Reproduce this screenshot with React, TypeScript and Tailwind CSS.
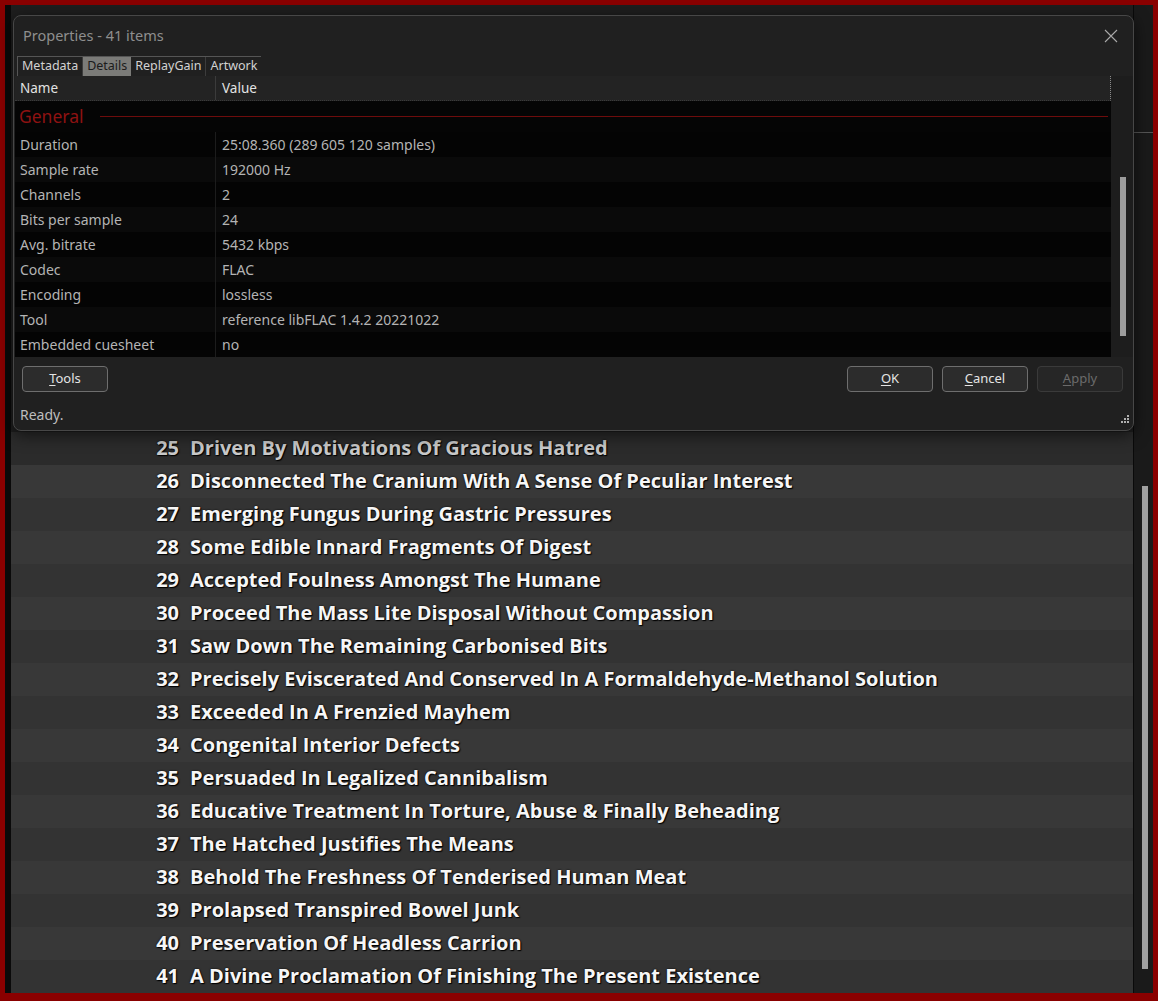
import React from 'react';

const details: [string, string][] = [
  ['Duration', '25:08.360 (289 605 120 samples)'],
  ['Sample rate', '192000 Hz'],
  ['Channels', '2'],
  ['Bits per sample', '24'],
  ['Avg. bitrate', '5432 kbps'],
  ['Codec', 'FLAC'],
  ['Encoding', 'lossless'],
  ['Tool', 'reference libFLAC 1.4.2 20221022'],
  ['Embedded cuesheet', 'no'],
];

const tracks: [number, string][] = [
  [25, 'Driven By Motivations Of Gracious Hatred'],
  [26, 'Disconnected The Cranium With A Sense Of Peculiar Interest'],
  [27, 'Emerging Fungus During Gastric Pressures'],
  [28, 'Some Edible Innard Fragments Of Digest'],
  [29, 'Accepted Foulness Amongst The Humane'],
  [30, 'Proceed The Mass Lite Disposal Without Compassion'],
  [31, 'Saw Down The Remaining Carbonised Bits'],
  [32, 'Precisely Eviscerated And Conserved In A Formaldehyde-Methanol Solution'],
  [33, 'Exceeded In A Frenzied Mayhem'],
  [34, 'Congenital Interior Defects'],
  [35, 'Persuaded In Legalized Cannibalism'],
  [36, 'Educative Treatment In Torture, Abuse & Finally Beheading'],
  [37, 'The Hatched Justifies The Means'],
  [38, 'Behold The Freshness Of Tenderised Human Meat'],
  [39, 'Prolapsed Transpired Bowel Junk'],
  [40, 'Preservation Of Headless Carrion'],
  [41, 'A Divine Proclamation Of Finishing The Present Existence'],
];

const uiFont = { fontFamily: '"Noto Sans", "Open Sans", sans-serif' };
const listFont = { fontFamily: '"Open Sans", "Noto Sans", sans-serif', textShadow: '1px 1px 1px #000, 0 0 2px #000' };

const Btn = ({ k, rest, disabled }: { k: string; rest: string; disabled?: boolean }) => (
  <button
    className={`w-[86px] h-[26px] rounded-[4px] border text-[13px] ${
      disabled ? 'bg-[#262626] border-[#3a3a3a] text-[#6b6b6b]' : 'bg-[#2c2c2c] border-[#6e6e6e] text-[#e4e4e4]'
    }`}
  >
    <span className="underline underline-offset-2">{k}</span>
    {rest}
  </button>
);

export default function App() {
  return (
    <div className="w-[1158px] h-[1001px] bg-[#8a0000] pt-[5px] px-[5px] pb-[8px] relative" style={uiFont}>
      <div className="flex h-full bg-[#1c1c1c]">
        {/* left strip */}
        <div className="w-[6px] bg-[#0a0a0a]" />

        {/* playlist */}
        <div className="flex-1 flex flex-col bg-[#232323]">
          <div className="h-[427px] shrink-0 bg-[#1e1e1e]" />
          {tracks.map(([n, t], i) => (
            <div
              key={n}
              className={`h-[33px] shrink-0 flex items-center pb-[2px] text-[20px] font-bold ${
                i === 0 ? 'bg-[#2b2b2b]' : i % 2 ? 'bg-[#383838]' : 'bg-[#333333]'
              } ${i === 0 ? 'text-[#c9c9c9]' : 'text-[#f6f6f6]'}`}
              style={listFont}
            >
              <span className="w-[168px] text-right">{n}</span>
              <span className="ml-[11px] whitespace-nowrap">{t}</span>
            </div>
          ))}
        </div>

        {/* main scrollbar */}
        <div className="w-[20px] flex flex-col border-l border-[#0a0a0a] bg-[#1a1a1a]">
          <div className="h-[128px] border-b border-[#555]" />
          <div className="flex-1 flex flex-col">
            <div className="h-[353px]" />
            <div className="ml-[8px] w-[6px] h-[483px] bg-[#a0a0a0]" />
          </div>
        </div>
      </div>

      {/* Properties dialog */}
      <div className="absolute left-[13px] top-[15px] w-[1121px] h-[416px] rounded-[8px] border border-[#474747] bg-[#202020] flex flex-col overflow-hidden shadow-[0_4px_16px_rgba(0,0,0,0.6)]">
        <div className="h-[40px] shrink-0 flex items-center justify-between pl-[9px] pr-[15px]">
          <span className="text-[14.5px] text-[#8e8e8e]">Properties - 41 items</span>
          <svg width="14" height="14" viewBox="0 0 14 14">
            <path d="M1 1L13 13M13 1L1 13" stroke="#a8a8a8" strokeWidth="1.1" />
          </svg>
        </div>

        {/* tabs */}
        <div className="flex ml-[3px] h-[20px] text-[12.5px] text-[#d2d2d2] border-t border-l border-[#555] w-fit">
          <div className="px-[4px] flex items-center border-r border-[#3c3c3c]">Metadata</div>
          <div className="px-[4px] flex items-center bg-[#7b7b78] text-[#1c1c1c]">Details</div>
          <div className="px-[4px] flex items-center border-r border-[#3c3c3c]">ReplayGain</div>
          <div className="px-[4px] flex items-center">Artwork</div>
        </div>

        {/* table */}
        <div className="flex h-[281px] shrink-0 ml-[1px]">
          <div className="flex-1 flex flex-col">
            <div className="h-[25px] shrink-0 flex items-center text-[13.5px] text-[#e2e2e2] bg-[#232323] border-b border-dotted border-[#3a3a3a] border-r-[#8a8a8a] border-r">
              <div className="w-[201px] pl-[5px] h-full flex items-center border-r border-[#3b3b3b]">Name</div>
              <div className="pl-[6px]">Value</div>
            </div>
            <div className="flex-1 bg-[#050505] flex flex-col">
              <div className="h-[31px] shrink-0 flex items-center pl-[4px]">
                <span className="text-[17.5px] text-[#8e1212]">General</span>
                <div className="flex-1 h-px bg-[#6e0c0c] ml-[16px] mr-[3px]" />
              </div>
              {details.map(([k, v], i) => (
                <div
                  key={k}
                  className={`h-[25px] flex items-center text-[14px] text-[#b4b4b4] ${i % 2 ? 'bg-[#0a0a0a]' : 'bg-[#040404]'}`}
                >
                  <div className="w-[201px] pl-[5px] h-full flex items-center border-r border-[#1c1c1c]">{k}</div>
                  <div className="pl-[6px]">{v}</div>
                </div>
              ))}
            </div>
          </div>
          <div className="w-[22px] bg-[#1d1d1d] pt-[101px]">
            <div className="ml-[9px] w-[6px] h-[159px] bg-[#9c9c9c]" />
          </div>
        </div>

        {/* buttons */}
        <div className="flex items-center mt-[9px] px-[8px]">
          <Btn k="T" rest="ools" />
          <div className="flex-1" />
          <div className="flex gap-[9px] mr-[2px]">
            <Btn k="O" rest="K" />
            <Btn k="C" rest="ancel" />
            <Btn k="A" rest="pply" disabled />
          </div>
        </div>

        {/* status */}
        <div className="flex-1 flex items-end justify-between pl-[6px] pr-[3px] pb-[5px]">
          <span className="text-[14px] text-[#bdbdbd]">Ready.</span>
          <svg width="11" height="11" viewBox="0 0 11 11" className="mb-[-1px]">
            <rect x="8" y="0" width="2" height="2" fill="#b0b0b0" />
            <rect x="5" y="3" width="2" height="2" fill="#b0b0b0" />
            <rect x="8" y="3" width="2" height="2" fill="#b0b0b0" />
            <rect x="2" y="6" width="2" height="2" fill="#b0b0b0" />
            <rect x="5" y="6" width="2" height="2" fill="#b0b0b0" />
            <rect x="8" y="6" width="2" height="2" fill="#b0b0b0" />
          </svg>
        </div>
      </div>
    </div>
  );
}
